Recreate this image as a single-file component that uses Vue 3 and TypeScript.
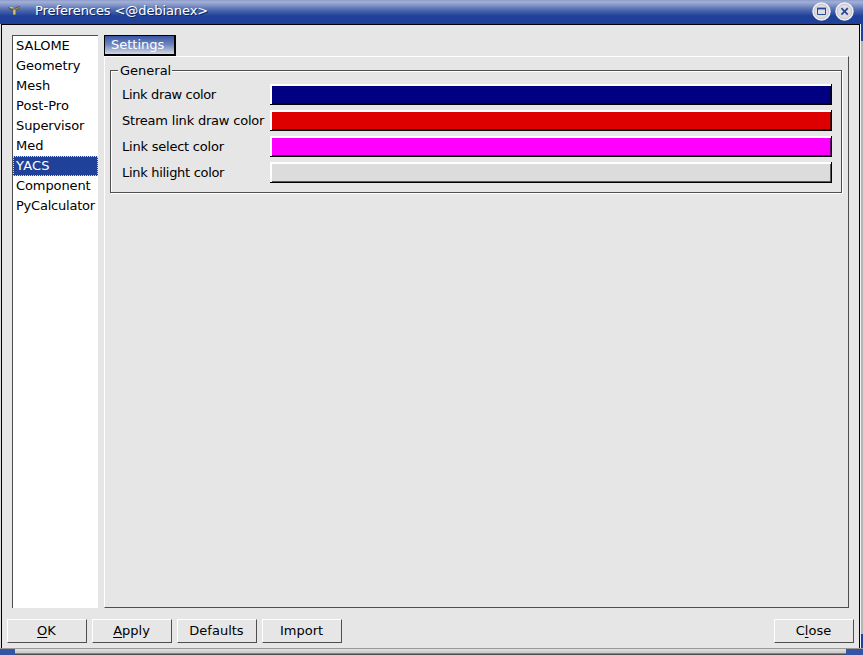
<script setup lang="ts">
import { ref } from 'vue'

interface ModuleEntry {
  name: string
  tracking: number
}

interface ColorPreference {
  label: string
  tone: string
  tracking: number
}

const modules: ModuleEntry[] = [
  { name: 'SALOME', tracking: 0 },
  { name: 'Geometry', tracking: -0.05 },
  { name: 'Mesh', tracking: 0 },
  { name: 'Post-Pro', tracking: 0.06 },
  { name: 'Supervisor', tracking: -0.12 },
  { name: 'Med', tracking: 0 },
  { name: 'YACS', tracking: 0.2 },
  { name: 'Component', tracking: -0.1 },
  { name: 'PyCalculator', tracking: -0.22 },
]
const selected = ref('YACS')

const colors: ColorPreference[] = [
  { label: 'Link draw color', tone: 'navy', tracking: -0.35 },
  { label: 'Stream link draw color', tone: 'red', tracking: -0.2 },
  { label: 'Link select color', tone: 'magenta', tracking: -0.22 },
  { label: 'Link hilight color', tone: 'grey', tracking: -0.3 },
]
</script>

<template>
  <div class="window">
    <header class="titlebar">
      <svg class="app-icon" width="13" height="12" viewBox="0 0 13 12">
        <path d="M0 2 L4 2 L6 4 L8 2 L12 1 L12 3 L9 5 L8 6 L7.5 10 L5 10 L5 6 L1 4 Z" fill="#5a5a48" />
        <path d="M1 2 H4.5 L6 3.6 H3 Z M5.2 4.5 H7.5 V9.5 H5.2 Z" fill="#dcc169" />
        <path d="M7 3.5 L11.5 1.8 V3 L8 4.6 Z" fill="#a08a3c" />
      </svg>
      <h1 class="title">Preferences &lt;@debianex&gt;</h1>
      <button class="win-button" aria-label="Maximize">
        <svg width="19" height="19" viewBox="0 0 19 19">
          <circle cx="9.5" cy="9.5" r="9.2" fill="#f0f0f2" />
          <circle cx="9.5" cy="9.5" r="7.2" fill="#dedee0" stroke="#c2c2c8" />
          <path d="M5.5 6.5 H13.5 V12.5 H5.5 Z" fill="none" stroke="#2a469a" />
          <path d="M5 6.5 H14" stroke="#2a469a" stroke-width="1.8" />
        </svg>
      </button>
      <button class="win-button" aria-label="Close window">
        <svg width="19" height="19" viewBox="0 0 19 19">
          <circle cx="9.5" cy="9.5" r="9.2" fill="#f0f0f2" />
          <circle cx="9.5" cy="9.5" r="7.2" fill="#dedee0" stroke="#c2c2c8" />
          <path d="M6.4 6.2 L12.8 12.6 M12.8 6.2 L6.4 12.6" stroke="#2a469a" stroke-width="1.7" />
        </svg>
      </button>
    </header>

    <div class="frame">
      <div class="client">
        <div class="main">
          <ul class="modules">
            <li
              v-for="item in modules"
              :key="item.name"
              :class="{ active: item.name === selected }"
              :style="{ letterSpacing: item.tracking + 'px' }"
              @click="selected = item.name"
            >{{ item.name }}</li>
          </ul>
          <section class="content">
            <div class="tab">Settings</div>
            <div class="panel">
              <div class="group">
                <div class="group-head"><span>General</span></div>
                <div class="rows">
                  <div v-for="item in colors" :key="item.label" class="row">
                    <span class="label" :style="{ letterSpacing: item.tracking + 'px' }">{{ item.label }}</span>
                    <button class="swatch" :class="item.tone" :aria-label="item.label"></button>
                  </div>
                </div>
              </div>
            </div>
          </section>
        </div>
        <footer class="actions">
          <button class="action"><span><u>O</u>K</span></button>
          <button class="action"><span><u>A</u>pply</span></button>
          <button class="action"><span>Defaults</span></button>
          <button class="action"><span>Import</span></button>
          <button class="action last"><span>C<u>l</u>ose</span></button>
        </footer>
      </div>
      <div class="edge"></div>
    </div>
    <div class="bottom-edge"></div>
  </div>
</template>

<style>
body {
  margin: 0;
  overflow: hidden;
}
</style>

<style scoped>
* {
  box-sizing: border-box;
}

.window {
  width: 863px;
  height: 655px;
  display: flex;
  flex-direction: column;
  background: #e6e6e6;
  color: #000;
  font: 13px/20px "DejaVu Sans", sans-serif;
}

button {
  padding: 0;
  margin: 0;
  font: inherit;
  color: inherit;
  border-radius: 0;
}

.titlebar {
  height: 24px;
  flex: none;
  display: flex;
  align-items: flex-start;
  padding: 2px 9px 0 8px;
  background: linear-gradient(#8d9ccb 0, #a3b0d6 2px, #8497c9 5px, #4e69b0 10px, #20419a 16px, #1f419b 24px);
}

.app-icon {
  margin-top: 3px;
}

.title {
  flex: 1;
  margin: 0 0 0 14px;
  font-size: 13px;
  font-weight: normal;
  line-height: 18px;
  letter-spacing: -0.09px;
  color: #fff;
  text-shadow: 1px 1px 0 #10285f;
}

.win-button {
  width: 19px;
  height: 19px;
  margin-left: 4px;
  border: 0;
  background: none;
}

.win-button svg {
  display: block;
}

.frame {
  height: 624px;
  flex: none;
  display: flex;
  background: #dcdcdc;
}

.client {
  width: 859px;
  margin-left: 1px;
  flex: none;
  display: flex;
  flex-direction: column;
  border: solid #000;
  border-width: 1px 1px 0 1px;
  background: #e6e6e6;
}

.edge {
  flex: 1;
  border-left: 1px solid #f2f2f2;
  background: linear-gradient(#20419a 17px, #b5b5b5 17px, #b5b5b5 610px, #20419a 610px);
}

.main {
  height: 583px;
  padding: 10px 10px 0 10px;
  display: flex;
  gap: 6px;
}

.modules {
  width: 86px;
  height: 573px;
  margin: 0;
  padding: 0;
  list-style: none;
  border: solid #4e4e4e;
  border-width: 1px 0 0 1px;
  background: #fff;
}

.modules li {
  height: 20px;
  width: 85px;
  padding-left: 3px;
  line-height: 19px;
  white-space: nowrap;
}

.modules li.active {
  padding-left: 2px;
  line-height: 17px;
  border: 1px dotted #d0daf0;
  background: #20419a;
  color: #fff;
}

.content {
  flex: 1;
  display: flex;
  flex-direction: column;
}

.tab {
  width: 72px;
  height: 21px;
  padding-left: 6px;
  line-height: 18px;
  color: #fff;
  border: solid #000;
  border-width: 1px 2px 2px 1px;
  background: linear-gradient(#3655a5, #7288bf 50%, #d3d8e5);
}

.panel {
  height: 552px;
  padding: 6px;
  border: 1px solid #fff;
  border-right-color: #4e4e4e;
  border-bottom-color: #4e4e4e;
}

.group {
  width: 732px;
  margin: 7px 0 0 -1px;
  height: 123px;
  border: 1px solid #4e4e4e;
  box-shadow: inset 1px 1px #fff, 1px 1px #fff;
}

.group-head {
  display: flex;
  align-items: flex-start;
  height: 12px;
  padding-left: 7px;
}

.group-head span {
  width: 54px;
  height: 16px;
  margin-top: -8px;
  padding-left: 2px;
  line-height: 16px;
  background: #e6e6e6;
}

.rows {
  display: flex;
  flex-direction: column;
  gap: 5px;
  padding: 1px 9px 0 11px;
}

.row {
  display: flex;
  height: 21px;
}

.label {
  width: 148px;
  flex: none;
  line-height: 22px;
  white-space: nowrap;
}

.swatch {
  flex: 1;
  border: 0;
  box-shadow:
    inset 0 -1px #000,
    inset -1px 0 #000,
    inset 0 2px #fff,
    inset 2px 0 #fff,
    inset -2px -2px rgba(0, 0, 0, 0.6);
}

.navy { background: #000080; }
.red { background: #de0000; }
.magenta { background: #ff00ff; }
.grey { background: #dcdcdc; }

.actions {
  display: flex;
  gap: 5px;
  padding: 11px 5px 0 5px;
}

.action {
  width: 80px;
  height: 24px;
  padding-right: 1px;
  border: 1px solid #fff;
  border-right-color: #4e4e4e;
  border-bottom-color: #4e4e4e;
  background: #e6e6e6;
  line-height: 20px;
}

.action.last {
  margin-left: auto;
}

u {
  text-decoration-thickness: 1px;
  text-underline-offset: 2px;
}

.bottom-edge {
  flex: 1;
  border-top: 1px solid #999;
  background:
    linear-gradient(90deg, #3554a5 15px, transparent 15px, transparent 846px, #3554a5 846px),
    linear-gradient(#e2e2e2, #c8c8c8 4px, #444 5px, #555);
}
</style>
